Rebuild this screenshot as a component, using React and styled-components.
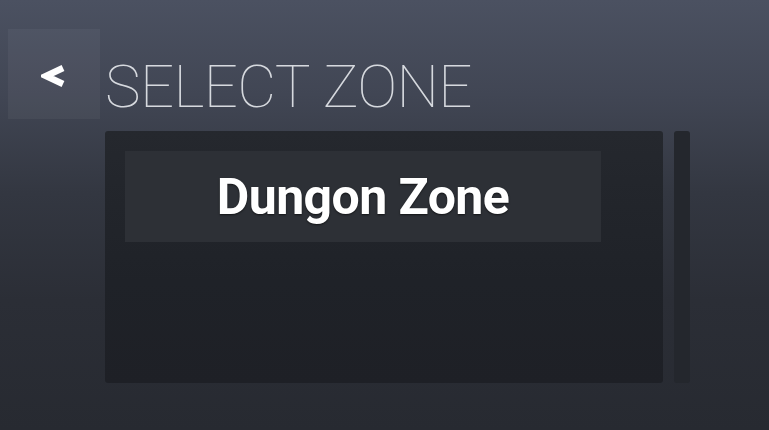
import React from 'react';
import styled, { createGlobalStyle } from 'styled-components';

const GlobalStyle = createGlobalStyle`
  html, body {
    margin: 0;
    padding: 0;
    height: 100%;
  }
  body {
    font-family: Roboto, "Liberation Sans", sans-serif;
    background: #2a2d35;
  }
  #root {
    height: 100%;
  }
`;

const Screen = styled.div`
  width: 769px;
  height: 430px;
  box-sizing: border-box;
  padding: 29px 0 0 8px;
  background: linear-gradient(180deg, #4b5161 0%, #414654 22%, #333741 45%, #2b2e36 70%, #272a31 100%);
  display: grid;
  grid-template-columns: 92px 1fr;
  grid-template-rows: 90px 252px;
  column-gap: 5px;
  row-gap: 12px;
  overflow: hidden;
`;

const BackButton = styled.button`
  width: 92px;
  height: 90px;
  border: none;
  padding: 3px 3px 0 0;
  background: rgba(255, 255, 255, 0.045);
  display: flex;
  align-items: center;
  justify-content: center;
  cursor: pointer;
`;

const Title = styled.h1`
  margin: 28px 0 0 0;
  font-family: Roboto, "Liberation Sans", sans-serif;
  font-weight: 100;
  font-size: 60px;
  line-height: 60px;
  color: #d6d9de;
  letter-spacing: -0.6px;
  white-space: nowrap;
`;

const Content = styled.div`
  grid-column: 2;
  display: flex;
  gap: 11px;
`;

const Panel = styled.div`
  width: 558px;
  height: 252px;
  box-sizing: border-box;
  padding: 20px;
  border-radius: 3px;
  background: linear-gradient(180deg, #25282e 0%, #1f2228 60%, #1e2026 100%);
`;

const ZoneItem = styled.div`
  width: 476px;
  height: 91px;
  display: flex;
  align-items: center;
  justify-content: center;
  background: #2d3036;
  color: #ffffff;
  font-family: Roboto, "Liberation Sans", sans-serif;
  font-weight: 700;
  font-size: 50px;
  letter-spacing: -0.6px;
  text-shadow: 0 1px 2px rgba(0, 0, 0, 0.6);
`;

const ScrollTrack = styled.div`
  width: 16px;
  height: 252px;
  border-radius: 3px;
  background: #24272d;
`;

const Chevron = () => (
  <svg width="24" height="22" viewBox="0 0 24 22">
    <path d="M22 3 L5 11 L22 19" fill="none" stroke="#ffffff" strokeWidth="6.5" strokeLinejoin="miter" />
  </svg>
);

export default function App() {
  return (
    <>
      <GlobalStyle />
      <Screen>
        <BackButton aria-label="Back">
          <Chevron />
        </BackButton>
        <Title>SELECT ZONE</Title>
        <Content>
          <Panel>
            <ZoneItem>Dungon Zone</ZoneItem>
          </Panel>
          <ScrollTrack />
        </Content>
      </Screen>
    </>
  );
}
